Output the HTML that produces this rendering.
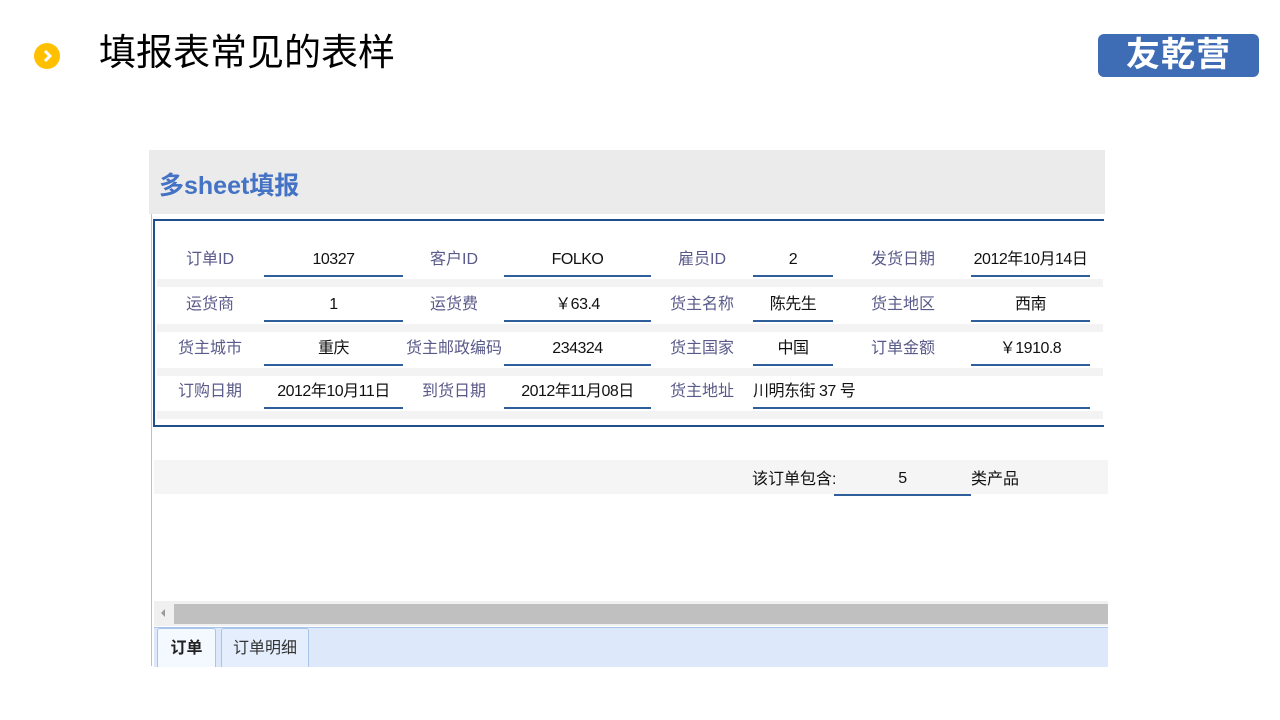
<!DOCTYPE html>
<html><head><meta charset="utf-8"><style>
body{margin:0;width:1280px;height:720px;background:#fff;position:relative;overflow:hidden;font-family:"Liberation Sans","Noto Sans CJK SC",sans-serif}
.a{position:absolute}
.lbl{position:absolute;color:#5a5a8a;font-size:16px;line-height:20px;text-align:center;transform:translateX(-50%);white-space:nowrap}
.val{position:absolute;color:#111;font-size:16px;letter-spacing:-0.5px;white-space:nowrap;text-align:center;border-bottom:2px solid #2e5f9a;height:32px;line-height:34px}
.band{position:absolute;left:157px;width:946px;height:8px;background:#f3f3f3}
</style></head><body>
<div class="a" style="left:34px;top:43px;width:26px;height:26px;border-radius:50%;background:#ffc000"></div>
<svg class="a" style="left:34px;top:43px" width="26" height="26"><path d="M11 8 L16 13 L11 18" stroke="#fff" stroke-width="3" fill="none"/></svg>
<div class="a" style="left:99px;top:31px;font-size:37px;color:#000;line-height:44px">填报表常见的表样</div>
<div class="a" style="left:1098px;top:34px;width:161px;height:43px;background:#3e6db5;border-radius:6px;color:#fff;font-size:34px;font-weight:bold;text-align:center;line-height:43px;letter-spacing:1px">友乾营</div>

<div class="a" style="left:149px;top:150px;width:956px;height:64px;background:#ebebeb"></div>
<div class="a" style="left:159px;top:166px;font-size:25px;font-weight:bold;color:#4472c4">多sheet填报</div>
<div class="a" style="left:151px;top:214px;width:1px;height:452px;background:#a9c4ea"></div>
<div class="a" style="left:153px;top:219px;width:949px;height:204px;border:2px solid #1f4f8f;border-right:none"></div>
<div class="band" style="top:279px"></div><div class="band" style="top:324px"></div><div class="band" style="top:368px"></div><div class="band" style="top:411px"></div>

<div class="lbl" style="left:210px;top:250px">订单ID</div>
<div class="val" style="left:264px;top:243px;width:139px">10327</div>
<div class="lbl" style="left:454px;top:250px">客户ID</div>
<div class="val" style="left:504px;top:243px;width:147px">FOLKO</div>
<div class="lbl" style="left:702px;top:250px">雇员ID</div>
<div class="val" style="left:753px;top:243px;width:80px">2</div>
<div class="lbl" style="left:903px;top:250px">发货日期</div>
<div class="val" style="left:971px;top:243px;width:119px">2012年10月14日</div>

<div class="lbl" style="left:210px;top:295px">运货商</div>
<div class="val" style="left:264px;top:288px;width:139px">1</div>
<div class="lbl" style="left:454px;top:295px">运货费</div>
<div class="val" style="left:504px;top:288px;width:147px">￥63.4</div>
<div class="lbl" style="left:702px;top:295px">货主名称</div>
<div class="val" style="left:753px;top:288px;width:80px">陈先生</div>
<div class="lbl" style="left:903px;top:295px">货主地区</div>
<div class="val" style="left:971px;top:288px;width:119px">西南</div>

<div class="lbl" style="left:210px;top:339px">货主城市</div>
<div class="val" style="left:264px;top:332px;width:139px">重庆</div>
<div class="lbl" style="left:454px;top:339px">货主邮政编码</div>
<div class="val" style="left:504px;top:332px;width:147px">234324</div>
<div class="lbl" style="left:702px;top:339px">货主国家</div>
<div class="val" style="left:753px;top:332px;width:80px">中国</div>
<div class="lbl" style="left:903px;top:339px">订单金额</div>
<div class="val" style="left:971px;top:332px;width:119px">￥1910.8</div>

<div class="lbl" style="left:210px;top:382px">订购日期</div>
<div class="val" style="left:264px;top:375px;width:139px">2012年10月11日</div>
<div class="lbl" style="left:454px;top:382px">到货日期</div>
<div class="val" style="left:504px;top:375px;width:147px">2012年11月08日</div>
<div class="lbl" style="left:702px;top:382px">货主地址</div>
<div class="val" style="left:753px;top:375px;width:337px;text-align:left">川明东街 37 号</div>

<div class="a" style="left:154px;top:460px;width:954px;height:34px;background:#f5f5f5"></div>
<div class="a" style="left:752px;top:470px;font-size:16px;line-height:20px;color:#111">该订单包含:</div>
<div class="val" style="left:834px;top:462px;width:137px">5</div>
<div class="a" style="left:971px;top:470px;font-size:16px;line-height:20px;color:#111">类产品</div>

<div class="a" style="left:154px;top:601px;width:954px;height:25px;background:#f0f0f0"></div>
<div class="a" style="left:174px;top:604px;width:934px;height:20px;background:#c0c0c0"></div>
<svg class="a" style="left:159px;top:607px" width="8" height="12"><path d="M6 2 L2 6 L6 10Z" fill="#999"/></svg>
<div class="a" style="left:154px;top:627px;width:954px;height:39px;background:#dde9fb;border-top:1px solid #a9c4ea"></div>
<div class="a" style="left:157px;top:628px;width:57px;height:38px;background:#f4f8ff;border:1px solid #a9c4ea;border-bottom:none;border-radius:3px 3px 0 0;font-size:16px;font-weight:bold;color:#222;text-align:center;line-height:40px">订单</div>
<div class="a" style="left:221px;top:628px;width:86px;height:38px;background:#e4eefc;border:1px solid #a9c4ea;border-bottom:none;border-radius:3px 3px 0 0;font-size:16px;color:#333;text-align:center;line-height:40px">订单明细</div>
</body></html>
